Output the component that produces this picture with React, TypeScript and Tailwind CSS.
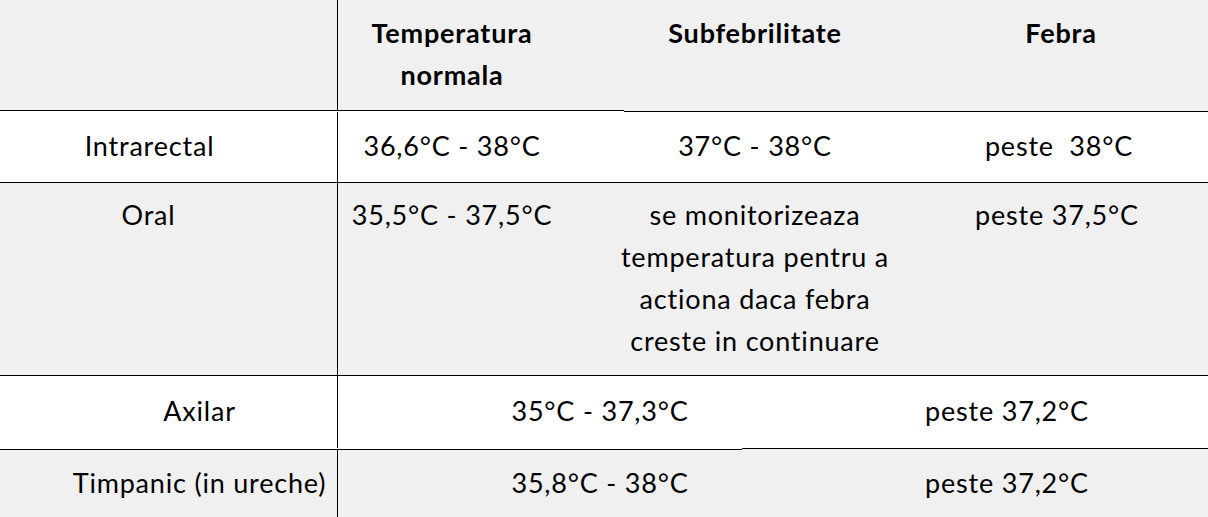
// Temperature reference table, laid out as stacked rows with per-row cells
const gray = 'bg-[#f0f0f0]';

// 2px separator between rows; the line jumps one pixel at `step`
const Rule = ({ step, leftFirst, above, below }: { step: number; leftFirst: boolean; above: string; below: string }) => {
  const top = (
    <>
      <div className="h-px bg-black" />
      <div className={`h-px ${below}`} />
    </>
  );
  const bottom = (
    <>
      <div className={`h-px ${above}`} />
      <div className="h-px bg-black" />
    </>
  );
  return (
    <div className="flex h-[2px]">
      <div className="flex flex-col" style={{ width: step }}>
        {leftFirst ? top : bottom}
      </div>
      <div className="flex flex-1 flex-col">{leftFirst ? bottom : top}</div>
    </div>
  );
};

export default function App() {
  return (
    <div className="w-[1208px] h-[517px] overflow-hidden bg-white text-black text-[27px] leading-[42px] tracking-[0.8px] [font-variant-ligatures:none] font-['Lato',sans-serif]">
      {/* header */}
      <div className={`flex h-[110px] ${gray} font-bold`}>
        <div className="w-[338px] border-r border-black" />
        <div className="w-[228px] pt-[12px] text-center">Temperatura normala</div>
        <div className="w-[378px] pt-[12px] text-center">Subfebrilitate</div>
        <div className="w-[234px] pt-[12px] text-center">Febra</div>
      </div>
      <Rule step={624} leftFirst above="bg-[#f0f0f0]" below="bg-white" />

      {/* Intrarectal */}
      <div className="flex h-[70px] bg-white items-stretch">
        <div className="w-[338px] border-r border-black flex items-center justify-center pr-[38px] pb-[2px]">Intrarectal</div>
        <div className="w-[228px] flex items-center justify-center pb-[2px]">36,6°C - 38°C</div>
        <div className="w-[378px] flex items-center justify-center pb-[2px]">37°C - 38°C</div>
        <div className="w-[230px] flex items-center justify-center pb-[2px] whitespace-pre">peste  38°C</div>
      </div>
      <div className="h-px bg-black" />

      {/* Oral */}
      <div className={`flex h-[192px] ${gray}`}>
        <div className="w-[338px] border-r border-black pt-[11px] pr-[40px] text-center">Oral</div>
        <div className="w-[228px] pt-[11px] text-center whitespace-nowrap">35,5°C - 37,5°C</div>
        <div className="w-[378px] pt-[11px] text-center">
          se monitorizeaza
          <br />
          temperatura pentru a
          <br />
          actiona daca febra
          <br />
          creste in continuare
        </div>
        <div className="w-[226px] pt-[11px] text-center">peste 37,5°C</div>
      </div>
      <div className="h-px bg-black" />

      {/* Axilar */}
      <div className="flex h-[72px] bg-white">
        <div className="w-[338px] border-r border-black flex items-center justify-center pl-[62px] pb-[2px]">Axilar</div>
        <div className="w-[524px] flex items-center justify-center pb-[2px]">35°C - 37,3°C</div>
        <div className="w-[290px] flex items-center justify-center pb-[2px]">peste 37,2°C</div>
      </div>
      <Rule step={742} leftFirst={false} above="bg-white" below="bg-[#f0f0f0]" />

      {/* Timpanic */}
      <div className={`flex h-[70px] ${gray}`}>
        <div className="w-[338px] border-r border-black flex items-center justify-center pl-[62px] pb-[4px] whitespace-nowrap">
          Timpanic (in ureche)
        </div>
        <div className="w-[524px] flex items-center justify-center pb-[4px]">35,8°C - 38°C</div>
        <div className="w-[290px] flex items-center justify-center pb-[4px]">peste 37,2°C</div>
      </div>
    </div>
  );
}
